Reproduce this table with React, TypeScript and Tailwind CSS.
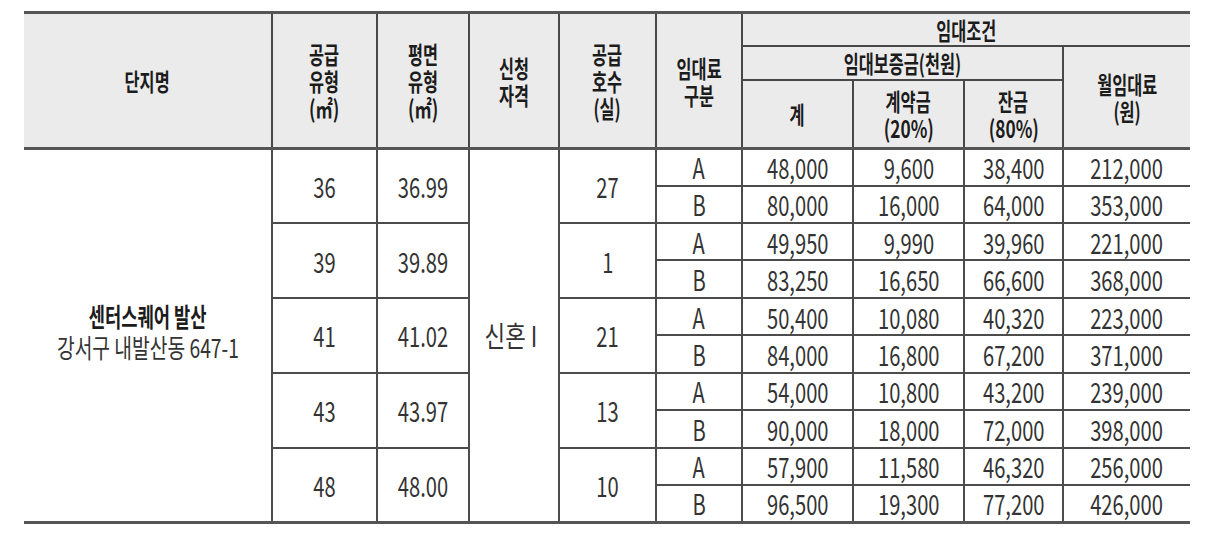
const groups = [
  { area: "36", plan: "36.99", units: "27", a: ["48,000", "9,600", "38,400", "212,000"], b: ["80,000", "16,000", "64,000", "353,000"] },
  { area: "39", plan: "39.89", units: "1", a: ["49,950", "9,990", "39,960", "221,000"], b: ["83,250", "16,650", "66,600", "368,000"] },
  { area: "41", plan: "41.02", units: "21", a: ["50,400", "10,080", "40,320", "223,000"], b: ["84,000", "16,800", "67,200", "371,000"] },
  { area: "43", plan: "43.97", units: "13", a: ["54,000", "10,800", "43,200", "239,000"], b: ["90,000", "18,000", "72,000", "398,000"] },
  { area: "48", plan: "48.00", units: "10", a: ["57,900", "11,580", "46,320", "256,000"], b: ["96,500", "19,300", "77,200", "426,000"] },
];

function Ko({ children }: { children: React.ReactNode }) {
  return <span className="inline-block scale-x-[0.68] whitespace-nowrap">{children}</span>;
}

function Num({ children }: { children: React.ReactNode }) {
  return <span className="inline-block scale-x-[0.72] whitespace-nowrap">{children}</span>;
}

const th = "border-2 border-[#484848] bg-[#ebebeb] font-bold text-[#1c1c1c] text-[24px] leading-[27px] text-center align-middle p-0";
const td = "border-2 border-[#4c4c4c] text-[#333] text-[28px] leading-none text-center align-middle p-0";

export default function App() {
  return (
    <div className="w-[1218px] h-[537px] bg-white pt-[11px] pl-[24px]" style={{ fontFamily: '"Noto Sans CJK KR", "Noto Sans", sans-serif' }}>
      <table className="table-fixed border-collapse w-[1166px]">
        <colgroup>
          <col className="w-[248px]" />
          <col className="w-[105px]" />
          <col className="w-[92px]" />
          <col className="w-[90px]" />
          <col className="w-[97px]" />
          <col className="w-[86px]" />
          <col className="w-[111px]" />
          <col className="w-[111px]" />
          <col className="w-[99px]" />
          <col className="w-[127px]" />
        </colgroup>
        <thead>
          <tr className="h-[33px] border-t-[3px] border-[#555]">
            <th rowSpan={3} className={`${th} border-l-0`}><Ko>단지명</Ko></th>
            <th rowSpan={3} className={th}>
              <div><Ko>공급</Ko></div>
              <div><Ko>유형</Ko></div>
              <div><Num>(㎡)</Num></div>
            </th>
            <th rowSpan={3} className={th}>
              <div><Ko>평면</Ko></div>
              <div><Ko>유형</Ko></div>
              <div><Num>(㎡)</Num></div>
            </th>
            <th rowSpan={3} className={th}>
              <div><Ko>신청</Ko></div>
              <div><Ko>자격</Ko></div>
            </th>
            <th rowSpan={3} className={th}>
              <div><Ko>공급</Ko></div>
              <div><Ko>호수</Ko></div>
              <div><Ko>(실)</Ko></div>
            </th>
            <th rowSpan={3} className={th}>
              <div><Ko>임대료</Ko></div>
              <div><Ko>구분</Ko></div>
            </th>
            <th colSpan={4} className={`${th} border-r-0`}><Ko>임대조건</Ko></th>
          </tr>
          <tr className="h-[34px]">
            <th colSpan={3} className={th}><Ko>임대보증금(천원)</Ko></th>
            <th rowSpan={2} className={`${th} border-r-0`}>
              <div><Ko>월임대료</Ko></div>
              <div><Ko>(원)</Ko></div>
            </th>
          </tr>
          <tr className="h-[69px] border-b-[3px] border-[#555]">
            <th className={th}><Ko>계</Ko></th>
            <th className={th}>
              <div><Ko>계약금</Ko></div>
              <div><Num>(20%)</Num></div>
            </th>
            <th className={th}>
              <div><Ko>잔금</Ko></div>
              <div><Num>(80%)</Num></div>
            </th>
          </tr>
        </thead>
        <tbody>
          {groups.map((g, i) => (
            <>
              <tr key={`${g.area}-a`} className="h-[37px]">
                {i === 0 && (
                  <td rowSpan={10} className={`${td} border-l-0 pb-[8px]`}>
                    <div className="font-bold text-[#1c1c1c] text-[26px] leading-[32px]"><Ko>센터스퀘어 발산</Ko></div>
                    <div className="text-[26px] leading-[30px]">
                      <span className="inline-block scale-x-[0.74] whitespace-nowrap">강서구 내발산동 647-1</span>
                    </div>
                  </td>
                )}
                <td rowSpan={2} className={td}><Num>{g.area}</Num></td>
                <td rowSpan={2} className={td}><Num>{g.plan}</Num></td>
                {i === 0 && (
                  <td rowSpan={10} className={`${td} text-[26px] pr-[6px]`}>
                    <span className="inline-block scale-x-[0.8] whitespace-nowrap">신혼 I</span>
                  </td>
                )}
                <td rowSpan={2} className={td}><Num>{g.units}</Num></td>
                <td className={td}><Num>A</Num></td>
                {g.a.map((v, k) => (
                  <td key={k} className={`${td} ${k === 3 ? "border-r-0" : ""}`}><Num>{v}</Num></td>
                ))}
              </tr>
              <tr key={`${g.area}-b`} className={`h-[37.8px] ${i === 4 ? "border-b-[3px] border-[#555]" : ""}`}>
                <td className={td}><Num>B</Num></td>
                {g.b.map((v, k) => (
                  <td key={k} className={`${td} ${k === 3 ? "border-r-0" : ""}`}><Num>{v}</Num></td>
                ))}
              </tr>
            </>
          ))}
        </tbody>
      </table>
    </div>
  );
}
